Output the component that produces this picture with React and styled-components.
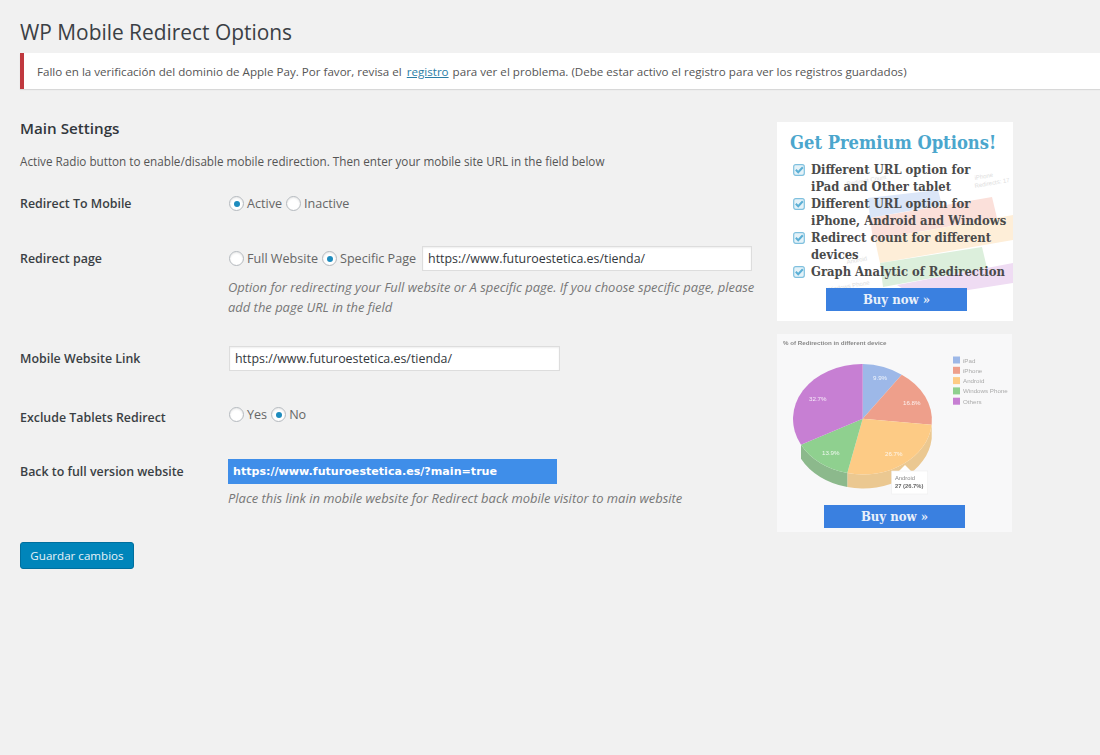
import React from 'react'
import styled, { createGlobalStyle } from 'styled-components'

const Global = createGlobalStyle`
  html, body { margin: 0; padding: 0; background: #f1f1f1; overflow: hidden; }
  body { font-family: "Open Sans", "Noto Sans", sans-serif; color: #444; font-size: 13px; }
`

const Page = styled.div`
  min-height: 755px;
  padding: 18px 0 0 20px;
  box-sizing: border-box;
`
const Title = styled.h1`
  margin: 0;
  font-size: 20.9px;
  line-height: 29px;
  font-weight: 400;
  color: #3b4045;
`
const Notice = styled.div`
  margin-top: 6px;
  height: 36px;
  display: flex;
  align-items: center;
  padding-left: 13px;
  background: #fff;
  border-left: 4px solid #c0393f;
  box-shadow: 0 1px 1px rgba(0, 0, 0, 0.1);
  font-size: 11.6px;
  color: #555;
  white-space: nowrap;
  a { color: #2b7ea6; margin: 0 4px 0 5px; }
`
const Columns = styled.div`
  display: flex;
  gap: 20px;
  margin-top: 30px;
`
const Main = styled.div`
  width: 737px;
`
const Side = styled.div`
  width: 236px;
  margin-top: 3px;
  display: flex;
  flex-direction: column;
  gap: 13px;
`
const Heading = styled.h2`
  margin: 0;
  font-size: 15.2px;
  line-height: 18px;
  font-weight: 600;
  color: #32373c;
`
const Intro = styled.p`
  margin: 15px 0 0;
  font-size: 11.7px;
  line-height: 18px;
  color: #555;
`
const Row = styled.div`
  display: grid;
  grid-template-columns: 208px 1fr;
  margin-top: ${p => p.$top}px;
`
const Label = styled.div`
  font-size: 12.4px;
  line-height: 25px;
  font-weight: 600;
  color: #3a3f44;
  padding-top: ${p => p.$drop || 0}px;
`
const Options = styled.div`
  display: flex;
  align-items: center;
  height: 25px;
  box-sizing: border-box;
  font-size: 12.6px;
  padding-left: 1px;
  padding-bottom: ${p => p.$lift || 0}px;
`
const Radio = styled.span`
  width: 15px;
  height: 15px;
  box-sizing: border-box;
  flex: none;
  border-radius: 50%;
  border: 1px solid #b4b9be;
  background: #fff;
  box-shadow: inset 0 1px 2px rgba(0, 0, 0, 0.1);
  display: flex;
  align-items: center;
  justify-content: center;
  margin-right: 3px;
  &::after {
    content: '';
    width: 6px;
    height: 6px;
    border-radius: 50%;
    background: ${p => (p.$on ? '#1e8cbe' : 'transparent')};
  }
`
const OptionText = styled.span`
  margin-right: 4px;
  color: #666;
`
const TextBox = styled.div`
  width: ${p => p.$w}px;
  height: 25px;
  box-sizing: border-box;
  margin-left: ${p => p.$left || 0}px;
  padding-left: 5px;
  display: flex;
  align-items: center;
  background: #fff;
  border: 1px solid #ddd;
  box-shadow: inset 0 1px 2px rgba(0, 0, 0, 0.07);
  font-size: 12.4px;
  color: #32373c;
`
const Help = styled.p`
  margin: ${p => p.$top}px 0 0;
  font-size: 12.95px;
  line-height: 20px;
  font-style: italic;
  color: #777;
  white-space: nowrap;
`
const LinkBox = styled.div`
  width: 329px;
  height: 25px;
  padding-left: 5px;
  box-sizing: border-box;
  display: flex;
  align-items: center;
  background: #3f8ee9;
  color: #fff;
  font-family: "DejaVu Sans", sans-serif;
  font-weight: 700;
  font-size: 11.1px;
`
const SaveButton = styled.button`
  display: block;
  margin-top: 34px;
  width: 114px;
  height: 27px;
  padding: 0;
  font: 11.6px "Open Sans", sans-serif;
  color: #e6f2f8;
  background: #0085ba;
  border: 1px solid #006f9e;
  border-radius: 3px;
`
const Promo = styled.div`
  position: relative;
  height: 199px;
  background: #fff;
  overflow: hidden;
  font-family: "DejaVu Serif", serif;
  font-stretch: condensed;
`
const PromoArt = styled.svg`
  position: absolute;
  inset: 0;
`
const PromoBody = styled.div`
  position: relative;
  padding: 9px 0 0 13px;
`
const PromoTitle = styled.div`
  font-size: 18.2px;
  line-height: 23px;
  font-weight: 700;
  color: #4ba6cd;
  white-space: nowrap;
`
const PromoList = styled.ul`
  list-style: none;
  margin: 7px 0 0;
  padding: 0 0 0 3px;
`
const PromoItem = styled.li`
  display: flex;
  gap: 6px;
  font-size: 12.9px;
  line-height: 17px;
  font-weight: 700;
  color: #4a4a4a;
  white-space: nowrap;
  svg { flex: none; margin-top: 3px; }
`
const BuyButton = styled.div`
  position: absolute;
  left: ${p => p.$left}px;
  bottom: ${p => p.$bottom}px;
  width: 141px;
  height: 23px;
  display: flex;
  align-items: center;
  justify-content: center;
  background: #3a80e0;
  color: #e9f0fa;
  font-family: "DejaVu Serif", serif;
  font-stretch: condensed;
  font-weight: 700;
  font-size: 13px;
`
const ChartCard = styled.div`
  position: relative;
  width: 235px;
  height: 198px;
  background: #f8f8f9;
  overflow: hidden;
`
const ChartArt = styled.svg`
  display: block;
  font-family: "Liberation Sans", sans-serif;
  filter: blur(0.3px);
`

function Check() {
  return (
    <svg width="12" height="12" viewBox="0 0 12 12">
      <rect x="0.7" y="0.7" width="10.6" height="10.6" rx="2" fill="#e4f2f8" stroke="#7fc0de" strokeWidth="1.2" />
      <path d="M2.8 5.8 L5.2 8.2 L9.8 3.2" fill="none" stroke="#5bafd5" strokeWidth="2" />
    </svg>
  )
}

const bands = [
  ['91,76 161,68 165,83 93,96', '#dbe6f8'],
  ['93,96 215,75 220,96 96,118', '#fbe0da'],
  ['98,118 236,93 236,118 103,141', '#feeed8'],
  ['103,141 205,125 210,146 106,165', '#dcefdc'],
  ['120,163 236,141 236,161 140,176', '#efdcf3'],
]

function PromoBands() {
  return (
    <PromoArt width="236" height="199" viewBox="0 0 236 199">
      {bands.map(([points, fill]) => <polygon key={points} points={points} fill={fill} />)}
      <g fill="#ddd" fontSize="6" fontFamily="Liberation Sans, sans-serif">
        <text x="198" y="58" transform="rotate(-10 198 58)">iPhone</text>
        <text x="198" y="66" transform="rotate(-10 198 66)">Redirects: 17</text>
        <text x="70" y="64" transform="rotate(-10 70 64)">Redirect Count</text>
        <text x="70" y="85" transform="rotate(-10 70 85)">iPad</text>
        <text x="70" y="142" transform="rotate(-10 70 142)">Android</text>
        <text x="50" y="170" transform="rotate(-10 50 170)">Windows Phone</text>
      </g>
    </PromoArt>
  )
}

const legend = [
  ['iPad', '#9db8e8'],
  ['iPhone', '#ee9f8b'],
  ['Android', '#fdcb85'],
  ['Windows Phone', '#8fd08f'],
  ['Others', '#c77fd3'],
]

function PieChart() {
  return (
    <ChartArt width="235" height="198" viewBox="0 0 235 198">
      <text x="6" y="11" fontSize="6.2" fontWeight="700" fill="#888">% of Redirection in different device</text>
      <path d="M154.7 90.7 A69 55 0 0 1 70.3 139 L70.3 153 A69 55 0 0 0 154.7 104.7 Z" fill="#ebc891" />
      <path d="M70.3 139 A69 55 0 0 1 24 110.7 L24 124.7 A69 55 0 0 0 70.3 153 Z" fill="#8cb98c" />
      <path d="M85.7 84.7 L85.7 30 A69 55 0 0 1 124.7 40.7 Z" fill="#9db8e8" />
      <path d="M85.7 84.7 L124.7 40.7 A69 55 0 0 1 154.7 90.7 Z" fill="#ee9f8b" />
      <path d="M85.7 84.7 L154.7 90.7 A69 55 0 0 1 70.3 139 Z" fill="#fdcb85" />
      <path d="M85.7 84.7 L70.3 139 A69 55 0 0 1 24 110.7 Z" fill="#8fd08f" />
      <path d="M85.7 84.7 L24 110.7 A69 55 0 0 1 85.7 30 Z" fill="#c77fd3" />
      <g fill="#fff" fontSize="6.2" opacity="0.85">
        <text x="96" y="46">9.9%</text>
        <text x="126" y="71">16.8%</text>
        <text x="108" y="122">26.7%</text>
        <text x="45" y="121">13.9%</text>
        <text x="32" y="67">32.7%</text>
      </g>
      {legend.map(([name, color], i) => (
        <g key={name}>
          <rect x="176" y={22.5 + i * 10.3} width="7" height="7" fill={color} />
          <text x="186" y={28.5 + i * 10.3} fontSize="6.2" fill="#aaa">{name}</text>
        </g>
      ))}
      <path d="M128 131 L122 137 L134 137 Z" fill="#fff" />
      <rect x="114.7" y="137" width="36" height="23" fill="#fff" stroke="#eee" strokeWidth="0.6" />
      <text x="118" y="146" fontSize="5.8" fill="#888">Android</text>
      <text x="118" y="154" fontSize="5.8" fontWeight="700" fill="#666">27 (26.7%)</text>
    </ChartArt>
  )
}

export default function App() {
  return (
    <Page>
      <Global />
      <Title>WP Mobile Redirect Options</Title>
      <Notice>
        Fallo en la verificación del dominio de Apple Pay. Por favor, revisa el<a href="#registro">registro</a>para ver el problema. (Debe estar activo el registro para ver los registros guardados)
      </Notice>
      <Columns>
        <Main>
          <Heading>Main Settings</Heading>
          <Intro>Active Radio button to enable/disable mobile redirection. Then enter your mobile site URL in the field below</Intro>

          <Row $top={21}>
            <Label>Redirect To Mobile</Label>
            <Options>
              <Radio $on /><OptionText>Active</OptionText>
              <Radio /><OptionText>Inactive</OptionText>
            </Options>
          </Row>

          <Row $top={30}>
            <Label>Redirect page</Label>
            <div>
              <Options>
                <Radio /><OptionText>Full Website</OptionText>
                <Radio $on /><OptionText>Specific Page</OptionText>
                <TextBox $w={330} $left={2}>https://www.futuroestetica.es/tienda/</TextBox>
              </Options>
              <Help $top={6}>Option for redirecting your Full website or A specific page. If you choose specific page, please<br />add the page URL in the field</Help>
            </div>
          </Row>

          <Row $top={29}>
            <Label>Mobile Website Link</Label>
            <Options>
              <TextBox $w={331}>https://www.futuroestetica.es/tienda/</TextBox>
            </Options>
          </Row>

          <Row $top={33}>
            <Label $drop={1}>Exclude Tablets Redirect</Label>
            <Options $lift={4}>
              <Radio /><OptionText>Yes</OptionText>
              <Radio $on /><OptionText>No</OptionText>
            </Options>
          </Row>

          <Row $top={29}>
            <Label>Back to full version website</Label>
            <div>
              <LinkBox>https://www.futuroestetica.es/?main=true</LinkBox>
              <Help $top={4}>Place this link in mobile website for Redirect back mobile visitor to main website</Help>
            </div>
          </Row>

          <SaveButton>Guardar cambios</SaveButton>
        </Main>

        <Side>
          <Promo>
            <PromoBands />
            <PromoBody>
              <PromoTitle>Get Premium Options!</PromoTitle>
              <PromoList>
                <PromoItem><Check /><span>Different URL option for<br />iPad and Other tablet</span></PromoItem>
                <PromoItem><Check /><span>Different URL option for<br />iPhone, Android and Windows</span></PromoItem>
                <PromoItem><Check /><span>Redirect count for different<br />devices</span></PromoItem>
                <PromoItem><Check /><span>Graph Analytic of Redirection</span></PromoItem>
              </PromoList>
            </PromoBody>
            <BuyButton $left={49} $bottom={10}>Buy now »</BuyButton>
          </Promo>
          <ChartCard>
            <PieChart />
            <BuyButton $left={47} $bottom={4}>Buy now »</BuyButton>
          </ChartCard>
        </Side>
      </Columns>
    </Page>
  )
}
